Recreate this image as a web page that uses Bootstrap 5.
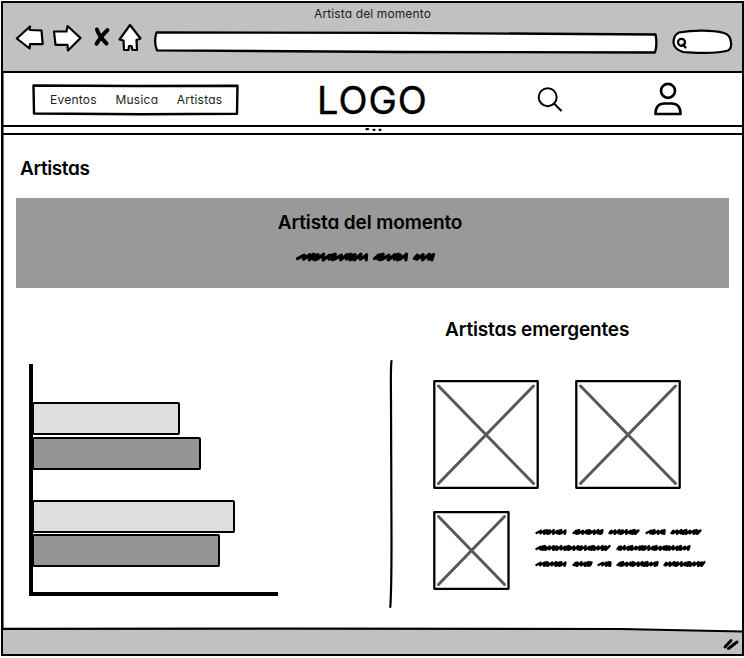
<!DOCTYPE html>
<html lang="es">
<head>
<meta charset="utf-8">
<meta name="viewport" content="width=device-width, initial-scale=1">
<title>Artista del momento</title>
<link href="https://cdn.jsdelivr.net/npm/bootstrap@5.3.0/dist/css/bootstrap.min.css" rel="stylesheet">
<style>
body{background:#fff;color:#000;font-family:Inter,Lato,sans-serif;font-feature-settings:"cv11" 1;overflow:hidden}
svg{display:block;flex:none;overflow:visible;fill:none;stroke:#000;stroke-linecap:round;stroke-linejoin:round}
.window{width:743px;height:655px;margin:1px 0 0 1px;border:2px solid #000;box-shadow:inset 1px 0 #777}
.chrome{height:70px;background:#c1c1c1;border-bottom:2px solid #000}
.chrome-title{font-size:12px;line-height:16px;padding:3px 0 0 0;letter-spacing:.12px;color:#222}
.toolbar{padding-left:12px;height:36px;margin-top:1px}
.topnav{height:54px;border-bottom:2px solid #000;padding-left:29px}
.menu{width:207px;height:31px;padding:1px 0 0 18px;font-size:12px;letter-spacing:.25px;gap:18.5px}
.menu a{color:#222;text-decoration:none;position:relative}
.menu svg{left:0;top:0}
.logo{font-size:38px;font-weight:400;line-height:52px;width:110px;margin:2px 0 0 78px;letter-spacing:1px;-webkit-text-stroke:.4px #000}
.search{margin-left:110px}
.user{margin-left:90px}
.strip{height:8px;border-bottom:2px solid #000}
.title{font-size:19px;font-weight:600;line-height:24px;margin:0;white-space:nowrap;letter-spacing:-.1px}
.content{height:493px;padding:22px 13px 0 13px}
.page-title{margin-left:4px;letter-spacing:-.4px}
.banner{height:90px;background:#999;margin-top:17px;padding:13px 5px 0 0}
.banner .scrawl{margin:16px 8px 0 0}
.chart{width:249px;height:232px;margin:76px 0 0 13px;border:solid #000;border-width:0 0 4px 4px;padding-top:38px}
.bar{height:33px;border:2px solid #000;border-left-width:1.5px;border-radius:1px 2px 1px 1px/1px 2px 4px 1px}
.bar.soft{background:#dedede}
.bar.deep{background:#949494}
.bar+.bar{margin-top:1.5px}
.group+.group{margin-top:30px}
.divider{margin:72px 0 0 111px}
.emerging{margin:30px 0 0 40px}
.emerging .title{margin-left:12px;letter-spacing:-.15px}
.pics{gap:36px;margin-top:38px}
.blurb{margin-top:22px}
.blurb .scrawl{margin:16px 0 0 25px}
.status{height:26px;background:#c1c1c1}
</style>
<script src="https://cdn.jsdelivr.net/npm/bootstrap@5.3.0/dist/js/bootstrap.bundle.min.js"></script>
</head>
<body>
<div class="window d-flex flex-column">
  <header class="chrome">
    <div class="chrome-title text-center">Artista del momento</div>
    <div class="toolbar d-flex">
      <svg width="126" height="30" viewBox="15 22 126 30" stroke-width="2.2">
        <path fill="#fff" d="M16.800 37.500 30 25.500 29.800 29 41.500 29.500 42.700 43.200 30 43.200 29.600 47.500Z"/>
        <path fill="#fff" d="M54 30.500 66.500 30.500 67.500 25 80.500 37 68 49.500 67.500 43.800 55.500 43.800Z"/>
        <path stroke-width="4" d="M97 28.500Q98.500 34.500 106.500 42.500M107.500 29Q101 35 96.500 42.800"/>
        <path fill="#fff" d="M130 24 140.500 37.500 136.500 39 137 49H132.500L131.500 45H129L128.500 49H124L123.500 39.500 119.500 38.500Z"/>
      </svg>
      <svg class="ms-2" width="512" height="30" viewBox="149 22 512 30" stroke-width="2.3">
        <path fill="#fff" d="M156.500 31.500 400 31.800 655.500 33.500Q657.500 43 655 51.500L400 51 157 49.300Q153.500 41 156.500 31.500Z"/>
      </svg>
      <svg class="ms-2" width="64" height="30" viewBox="669 22 64 30" stroke-width="2.200">
        <path fill="#fff" d="M679 31.500C693 29 712 29 724 32Q730.500 34 731 41.500 732 47 728 49.500C715 53.500 694 51.500 683 51Q674 48 673.500 41.500 673.500 34 679 31.500Z"/>
        <circle cx="681.500" cy="41.300" r="3.500"/><path d="M683 43.500 685.500 46.500"/>
      </svg>
    </div>
  </header>
  <nav class="topnav d-flex align-items-center">
    <div class="menu position-relative d-flex align-items-center">
      <svg class="position-absolute" width="207" height="31" viewBox="0 0 207 31" stroke-width="2.4"><path d="M1.500 1.500 104 2 205.500 1.700 205 29.800 110 30.300 2 29.500Z"/></svg>
      <a href="#">Eventos</a><a href="#">Musica</a><a href="#">Artistas</a>
    </div>
    <div class="logo">LOGO</div>
    <svg class="search" width="26" height="26" viewBox="537 87 26 26" stroke-width="2"><circle cx="547.700" cy="98.200" r="9"/><path d="M554.500 105 561 111.500"/></svg>
    <svg class="user" width="30" height="34" viewBox="653 84 30 34" stroke-width="2.700"><circle cx="668" cy="92.800" r="7"/><path d="M655.500 116Q655.500 105.500 664.500 105.500H671.500Q680.500 105.500 680.500 116Z"/></svg>
  </nav>
  <div class="strip d-flex justify-content-center"><svg width="18" height="4" viewBox="364 127 18 4" stroke-width="2.200"><path d="M366.500 129.200h1.500M373.500 129.800h1M379.500 129.800h1"/></svg></div>
  <main class="content">
    <h1 class="title page-title">Artistas</h1>
    <section class="banner d-flex flex-column align-items-center">
      <h2 class="title">Artista del momento</h2>
      <svg class="scrawl" width="140" height="12" data-amp="3.200" data-words="0,6,72 77,6,35 117,6,22"></svg>
    </section>
    <div class="d-flex">
      <div class="chart">
        <div class="group"><div class="bar soft" style="width:147px"></div><div class="bar deep" style="width:168px"></div></div>
        <div class="group"><div class="bar soft" style="width:202px"></div><div class="bar deep" style="width:187px"></div></div>
      </div>
      <svg class="divider" width="4" height="248" viewBox="389 360 4 248" stroke-width="2.200"><path d="M391.500 361Q390.600 366 391 400L391.500 540Q391.500 590 390.300 607"/></svg>
      <section class="emerging">
        <h2 class="title">Artistas emergentes</h2>
        <div class="pics d-flex">
          <svg width="106" height="109" viewBox="0 0 106 109"><path stroke-width="2.300" d="M1.300 1.200H104.700V107.800H1.300Z"/><path stroke="#585858" stroke-width="3" d="M5.500 6 100.500 103.500M100.500 6 5.500 103.500"/></svg>
          <svg width="106" height="109" viewBox="0 0 106 109"><path stroke-width="2.300" d="M1.300 1.200H104.700V107.800H1.300Z"/><path stroke="#585858" stroke-width="3" d="M5.500 6 100.500 103.500M100.500 6 5.500 103.500"/></svg>
        </div>
        <div class="blurb d-flex">
          <svg width="77" height="79" viewBox="0 0 77 79"><path stroke-width="2.300" d="M1.300 1.200H75.500V77.800H1.300Z"/><path stroke="#585858" stroke-width="3" d="M5.500 5.500 71.500 73.500M71.500 5.500 5.500 73.500"/></svg>
          <svg class="scrawl" width="172" height="42" data-amp="2.100" data-words="0,5,32 37,5,32 73,5,32 110,5,21 135,5,32 0,21,76 81,21,75 0,37,32 37,37,21 62,37,15 81,37,43 128,37,43"></svg>
        </div>
      </section>
    </div>
  </main>
  <footer class="status">
    <svg width="739" height="26" viewBox="3 628 739 26" stroke-width="2.200"><path fill="#fff" stroke="none" d="M620 627H742V631L640 629Z"/><path d="M3 628.800 300 628.600 620 629 742 631.500"/><path stroke-width="3" d="M725 647 731 640.500M728.500 648.500 737 642"/></svg>
  </footer>
</div>
<script>
// Fills each placeholder-text svg with hand-scribbled words given as "x,y,width".
// Letters alternate between wide open strokes and tight dense ones.
document.querySelectorAll('.scrawl').forEach(function (svg) {
  var amp = +svg.dataset.amp, rhythm = [1.9, 1.8, 1.1, .7, .7, 1.8, 1.9, 1, .7];
  svg.dataset.words.split(' ').forEach(function (word, n) {
    var p = word.split(',').map(Number), x = p[0] + 1.5, end = p[0] + p[2] - 1.5, i = 0;
    var d = 'M' + x + ' ' + (p[1] + amp * .5);
    while (x < end) {
      var r = rhythm[(i + n * 2) % rhythm.length] * amp, top = Math.min(x + r + amp * .2, end);
      d += 'L' + top + ' ' + (p[1] - amp * (.6 + (i % 3) * .15));
      x += r;
      if (x < end) d += 'Q' + (x - .4) + ' ' + p[1] + ' ' + x + ' ' + (p[1] + amp * (.65 + (i % 2) * .25));
      i++;
    }
    var path = document.createElementNS('http://www.w3.org/2000/svg', 'path');
    path.setAttribute('d', d);
    path.setAttribute('stroke-width', amp > 3 ? 3.2 : 2.4);
    svg.appendChild(path);
  });
});
</script>
</body>
</html>
